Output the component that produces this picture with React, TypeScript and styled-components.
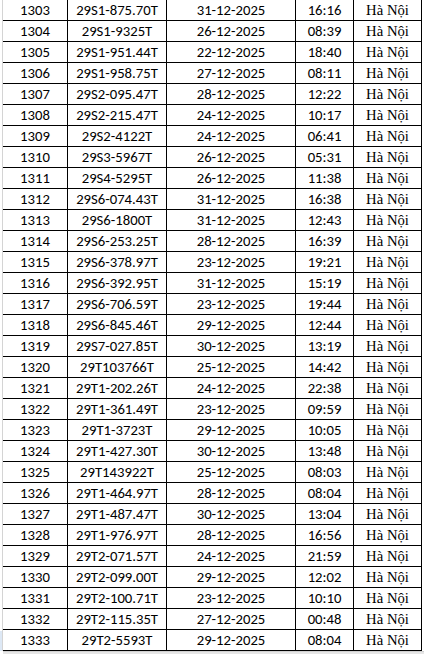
import styled, { createGlobalStyle } from 'styled-components'

type Row = { stt: number; plate: string; date: string; time: string; place: string }

const raw: [string, string, string][] = [
  ['29S1-875.70T', '31-12-2025', '16:16'],
  ['29S1-9325T', '26-12-2025', '08:39'],
  ['29S1-951.44T', '22-12-2025', '18:40'],
  ['29S1-958.75T', '27-12-2025', '08:11'],
  ['29S2-095.47T', '28-12-2025', '12:22'],
  ['29S2-215.47T', '24-12-2025', '10:17'],
  ['29S2-4122T', '24-12-2025', '06:41'],
  ['29S3-5967T', '26-12-2025', '05:31'],
  ['29S4-5295T', '26-12-2025', '11:38'],
  ['29S6-074.43T', '31-12-2025', '16:38'],
  ['29S6-1800T', '31-12-2025', '12:43'],
  ['29S6-253.25T', '28-12-2025', '16:39'],
  ['29S6-378.97T', '23-12-2025', '19:21'],
  ['29S6-392.95T', '31-12-2025', '15:19'],
  ['29S6-706.59T', '23-12-2025', '19:44'],
  ['29S6-845.46T', '29-12-2025', '12:44'],
  ['29S7-027.85T', '30-12-2025', '13:19'],
  ['29T103766T', '25-12-2025', '14:42'],
  ['29T1-202.26T', '24-12-2025', '22:38'],
  ['29T1-361.49T', '23-12-2025', '09:59'],
  ['29T1-3723T', '29-12-2025', '10:05'],
  ['29T1-427.30T', '30-12-2025', '13:48'],
  ['29T143922T', '25-12-2025', '08:03'],
  ['29T1-464.97T', '28-12-2025', '08:04'],
  ['29T1-487.47T', '30-12-2025', '13:04'],
  ['29T1-976.97T', '28-12-2025', '16:56'],
  ['29T2-071.57T', '24-12-2025', '21:59'],
  ['29T2-099.00T', '29-12-2025', '12:02'],
  ['29T2-100.71T', '23-12-2025', '10:10'],
  ['29T2-115.35T', '27-12-2025', '00:48'],
  ['29T2-5593T', '29-12-2025', '08:04'],
]

const rows: Row[] = raw.map(([plate, date, time], i) => ({
  stt: 1303 + i,
  plate,
  date,
  time,
  place: 'Hà Nội',
}))

const GlobalStyle = createGlobalStyle`
  html, body {
    margin: 0;
    padding: 0;
    background: #ffffff;
  }
`

const Sheet = styled.div`
  display: flex;
  flex-direction: column;
  width: 424px;
  height: 654px;
  overflow: hidden;
`

const Body = styled.div`
  display: flex;
`

const Gutter = styled.div`
  width: 2px;
  border-right: 1px solid #d4d4d4;
  display: flex;
  flex-direction: column;
  justify-content: flex-end;
`

const GutterMark = styled.div`
  height: 20px;
  background: #dde8f5;
`

const Table = styled.table`
  border-collapse: separate;
  border-spacing: 0;
  table-layout: fixed;
  width: 419px;
`

const Cell = styled.td<{ $w: number; $serif?: boolean }>`
  box-sizing: border-box;
  width: ${(p) => p.$w}px;
  height: 21px;
  padding: 0 0 1px;
  border-right: 1px solid #000;
  border-bottom: 1px solid #000;
  text-align: center;
  vertical-align: bottom;
  color: #000;
  white-space: nowrap;
  font-family: ${(p) => (p.$serif ? '"Liberation Serif", "Times New Roman", serif' : 'Carlito, Lato, "Open Sans", sans-serif')};
  font-size: ${(p) => (p.$serif ? '14.7px' : '14.7px')};
  line-height: 18px;
`

const Footer = styled.div`
  flex: 1;
  background: #e6e6e6;
  margin-left: 3px;
  border-top: 1px solid #d0d0d0;
`

export default function App() {
  return (
    <Sheet>
      <GlobalStyle />
      <Body>
        <Gutter>
          <GutterMark />
        </Gutter>
        <Table>
          <tbody>
            {rows.map((r) => (
              <tr key={r.stt}>
                <Cell $w={65}>{r.stt}</Cell>
                <Cell $w={99}>{r.plate}</Cell>
                <Cell $w={129}>{r.date}</Cell>
                <Cell $w={58}>{r.time}</Cell>
                <Cell $w={68} $serif>
                  {r.place}
                </Cell>
              </tr>
            ))}
          </tbody>
        </Table>
      </Body>
      <Footer />
    </Sheet>
  )
}
